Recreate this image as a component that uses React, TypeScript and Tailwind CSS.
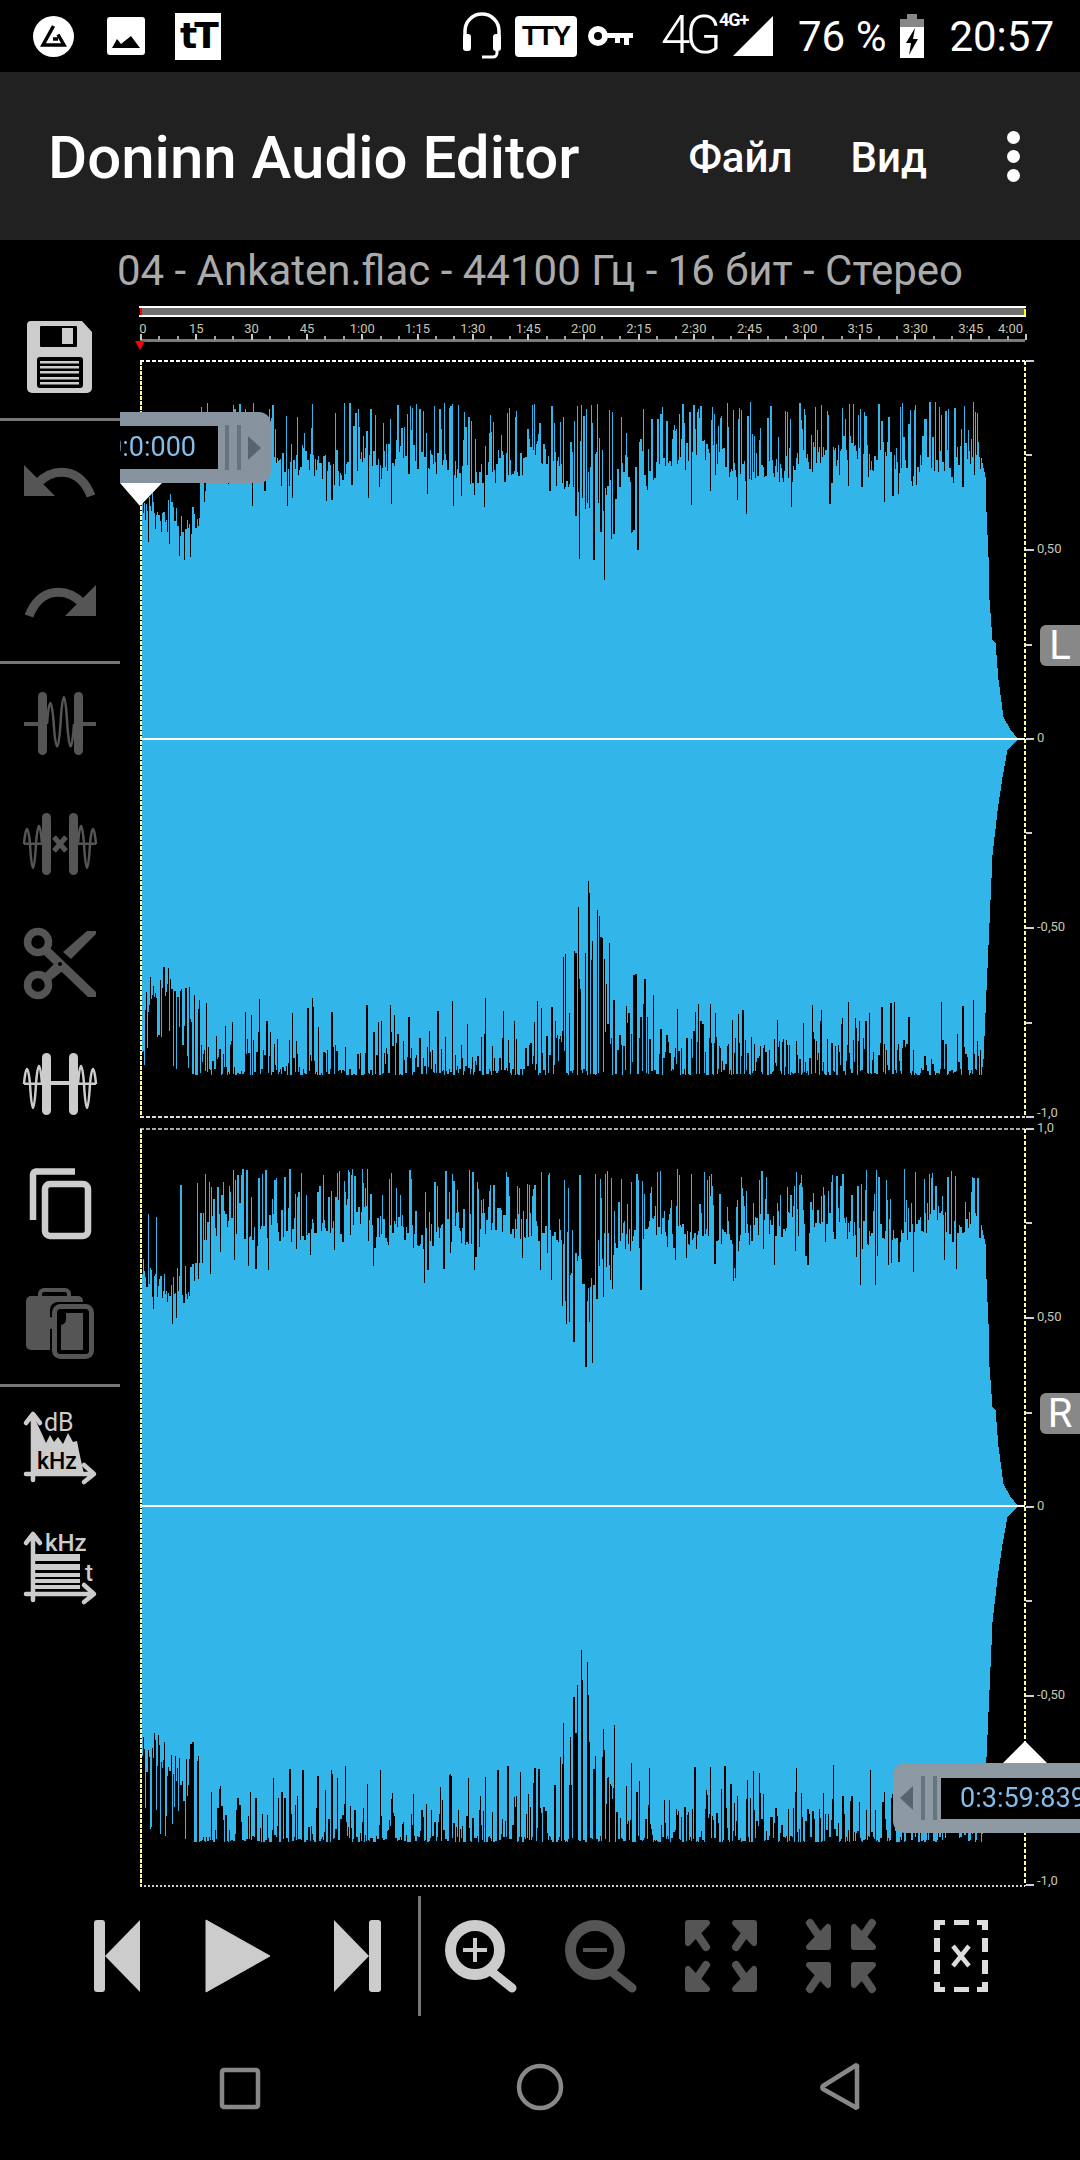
import type { ReactNode } from 'react';

const LIGHT = '#cccccc';
const DARK = '#555555';
const BLUE = '#32b5e8';

function mulberry(seed: number) {
  let a = seed;
  return () => {
    a = (a + 0x6d2b79f5) | 0;
    let t = Math.imul(a ^ (a >>> 15), 1 | a);
    t = (t + Math.imul(t ^ (t >>> 7), 61 | t)) ^ t;
    return ((t ^ (t >>> 14)) >>> 0) / 4294967296;
  };
}

function interp(table: number[][], x: number) {
  for (let i = 1; i < table.length; i++) {
    if (x <= table[i][0]) {
      const [x0, y0] = table[i - 1];
      const [x1, y1] = table[i];
      return y0 + ((y1 - y0) * (x - x0)) / (x1 - x0);
    }
  }
  return table[table.length - 1][1];
}

// fade-out at the end of the track, as distance from the zero line
const fadeTop = [[981, 281], [985, 262], [986, 227], [988, 182], [989, 139], [992, 99], [995, 96], [998, 59], [1003, 22], [1010, 9], [1017, 1], [1026, 0]];
const fadeBottom = [[981, 336], [983, 320], [986, 251], [992, 116], [997, 72], [1002, 38], [1007, 11], [1017, 1], [1026, 0]];

function channelPath(seed: number, zero: number, humpDepth: number, humpRise: number) {
  const rnd = mulberry(seed);
  let d = '';
  let x = 142;
  while (x < 1025) {
    const w = rnd() < 0.25 ? 2 : 1;
    let top: number;
    let bottom: number;
    if (x >= 981) {
      top = zero - interp(fadeTop, x);
      bottom = zero + interp(fadeBottom, x);
      d += `M${x} ${Math.round(top)}h1V${Math.round(bottom)}h-1Z`;
      x += 1;
      continue;
    }
    const g = Math.max(0, 1 - Math.abs(x - 588) / 36);
    const g2 = Math.max(0, 1 - Math.abs(x - 640) / 14) * 0.4;
    const hump = Math.max(g, g2);
    const r1 = rnd();
    const r2 = rnd();
    if (x < 200) {
      const body = zero - 225 - 10 * Math.sin(x / 9 + seed);
      if (r1 < 0.14) top = body - r2 * (seed > 5 && r2 > 0.5 ? 100 : 45);
      else if (r1 < 0.42) top = body + r2 * 36;
      else top = body + (r2 - 0.5) * 30;
      const low = zero + 252 + 12 * Math.sin(x / 8 + seed);
      const rb = rnd();
      if (x > 192 && rb < 0.5) bottom = zero + 336;
      else if (rb < 0.22) bottom = zero + 336 - r2 * 50;
      else if (rb < 0.4) bottom = low + r2 * 60;
      else bottom = low + (r2 - 0.5) * 34;
    } else {
      const cap = zero - 337;
      const body = zero - (289 + 7 * Math.sin(x / 23 + seed) + 4 * Math.sin(x / 7)) + 46 * hump;
      if (r1 < 0.34) top = cap + Math.pow(r2, 1.3) * (body - cap);
      else if (r1 < 0.58 + 0.12 * hump) top = body + Math.pow(r2, 1.5) * (60 + humpDepth * hump);
      else top = body + r2 * 26;
      const rb = rnd();
      const rc = rnd();
      const low = zero + 298 - 70 * hump;
      if (rb < 0.44) bottom = zero + 336 - rc * rc * 6;
      else if (rb < 0.84 - 0.25 * hump) bottom = low + rc * 38;
      else bottom = low - rc * (40 + humpRise * hump);
    }
    d += `M${x} ${Math.round(top)}h${w}V${Math.round(bottom)}h${-w}Z`;
    x += w;
  }
  return d;
}

const LABELS = ['0', '15', '30', '45', '1:00', '1:15', '1:30', '1:45', '2:00', '2:15', '2:30', '2:45', '3:00', '3:15', '3:30', '3:45', '4:00'];
const STEP = 885 / 16;

function Timeline() {
  return (
    <g>
      <rect x="140" y="307" width="885" height="9" fill="#6f6f6f" />
      <line x1="139" y1="307" x2="1026" y2="307" stroke="#fff" strokeWidth="2" />
      <line x1="139" y1="316" x2="1026" y2="316" stroke="#fff" strokeWidth="2" />
      <rect x="140" y="308" width="2" height="7" fill="#f00" />
      <rect x="1024" y="309" width="2" height="6" fill="#ff0" />
      <rect x="140" y="339" width="885" height="3" fill="#7a7a7a" />
      {LABELS.map((t, i) => {
        const x = 140 + i * STEP;
        return (
          <g key={t}>
            <rect x={Math.round(x)} y="334" width="2" height="6" fill="#c8c8c0" />
            {i < 16 && <rect x={Math.round(x + STEP / 3)} y="336" width="2" height="4" fill="#a0a0a0" />}
            {i < 16 && <rect x={Math.round(x + (2 * STEP) / 3)} y="336" width="2" height="4" fill="#a0a0a0" />}
            <text
              x={i === 0 ? 143 : i === 16 ? 1023 : x + 1}
              y="333"
              fontSize="13"
              fill="#c6c6b4"
              textAnchor={i === 16 ? 'end' : 'middle'}
            >
              {t}
            </text>
          </g>
        );
      })}
      <polygon points="135,341 145,341 140,350" fill="#f00" />
    </g>
  );
}

function Scale({ zero, top }: { zero: number; top: boolean }) {
  const ticks = [-378, -284, -189, -94, 0, 94, 189, 284, 378];
  const names: Record<number, string> = { [-189]: '0,50', 0: '0', 189: '-0,50', 378: '-1,0' };
  return (
    <g>
      {ticks.map((t) => (
        <rect key={t} x="1026" y={zero + t - 1} width={t % 189 === 0 ? 8 : 6} height="2" fill="#cfcfcf" />
      ))}
      {Object.entries(names).map(([t, s]) => (
        <text key={t} x="1037" y={zero + Number(t) + (Number(t) === 378 ? 0 : 3)} fontSize="13" fill="#c6c6b4">
          {s}
        </text>
      ))}
      <text x={top ? 1040 : 1037} y={top ? zero - 374 : zero - 375} fontSize="13" fill="#c6c6b4">
        1,0
      </text>
      {/* the first label runs off the top of the scale */}
      {top && <rect x="1035" y={zero - 395} width="45" height="33" fill="#000" />}
    </g>
  );
}

function Waveform() {
  return (
    <svg viewBox="120 297 960 1593" className="block w-[960px] h-[1593px]">
      <Timeline />
      <path d={channelPath(3, 739, 100, 62)} fill={BLUE} shapeRendering="crispEdges" />
      <path d={channelPath(11, 1506, 60, 85)} fill={BLUE} shapeRendering="crispEdges" />
      <rect x="141" y="738" width="884" height="2" fill="#fff" />
      <rect x="141" y="1505" width="884" height="2" fill="#fff" />
      <line x1="140" y1="361" x2="1025" y2="361" stroke="#fff" strokeWidth="2" strokeDasharray="4 2" />
      <line x1="140" y1="1117" x2="1025" y2="1117" stroke="#ddd" strokeWidth="2" strokeDasharray="4 2" />
      <line x1="140" y1="1129" x2="1025" y2="1129" stroke="#aaa" strokeWidth="2" strokeDasharray="4 2" />
      <line x1="140" y1="1886" x2="1025" y2="1886" stroke="#ccc" strokeWidth="2" strokeDasharray="2 2" />
      {[[361, 1117], [1129, 1886]].map(([a, b]) => (
        <g key={a}>
          <line x1="141" y1={a} x2="141" y2={b} stroke="#ffffa0" strokeWidth="2" strokeDasharray="4 1" />
          <line x1="1025" y1={a} x2="1025" y2={b} stroke="#ffffa0" strokeWidth="2" strokeDasharray="4 2" />
        </g>
      ))}
      <Scale zero={739} top />
      <Scale zero={1507} top={false} />
    </svg>
  );
}

function Icon({ children, w = 72, color = LIGHT }: { children: ReactNode; w?: number; color?: string }) {
  return (
    <svg viewBox={`0 0 ${w} 72`} width={w} height="72" fill={color} stroke="none" className="overflow-visible">
      {children}
    </svg>
  );
}

function SaveIcon() {
  return (
    <Icon>
      <path d="M7 0H58L68 11V67a5 5 0 0 1-5 5H8a5 5 0 0 1-5-5V4a4 4 0 0 1 4-4Z" />
      <rect x="16" y="5" width="37" height="21" rx="1" fill="#000" />
      <rect x="38" y="7" width="11" height="16" />
      <rect x="13" y="36" width="46" height="31" rx="3" fill="#000" />
      {[40, 45, 50, 56, 61].map((y) => (
        <rect key={y} x="16" y={y} width="39" height="2.5" />
      ))}
    </Icon>
  );
}

function UndoIcon({ flip }: { flip?: boolean }) {
  return (
    <Icon color={DARK}>
      <g transform={flip ? 'matrix(-1 0 0 1 72 0)' : undefined}>
        <polygon points="0,20 0,51 31,51" />
        <path d="M14 38C30 22 56 22 67 51" fill="none" stroke={DARK} strokeWidth="9" />
      </g>
    </Icon>
  );
}

function zig(x0: number, x1: number, amps: number[]) {
  const n = amps.length;
  const step = (x1 - x0) / n;
  let d = `M${x0} 36`;
  amps.forEach((a, i) => {
    const xa = x0 + step * i;
    const sign = i % 2 === 0 ? -1 : 1;
    d += `C${xa + step * 0.3} ${36 + sign * a} ${xa + step * 0.7} ${36 + sign * a} ${xa + step} 36`;
  });
  return d;
}

function WaveJoin({ color }: { color: string }) {
  return (
    <Icon color={color}>
      <rect x="0" y="34" width="14" height="4" />
      <rect x="58" y="34" width="14" height="4" />
      <rect x="14" y="4" width="9" height="63" rx="4.5" />
      <rect x="50" y="4" width="9" height="63" rx="4.5" />
      <path d={zig(23, 50, [28, 30, 36, 30])} fill="none" stroke={color} strokeWidth="2.5" />
    </Icon>
  );
}

function WaveSplit({ color, mid }: { color: string; mid: 'x' | 'bar' }) {
  return (
    <Icon color={color}>
      <rect x="0" y="34.5" width="72" height="2.5" />
      <rect x="18" y="5" width="9" height="62" rx="4.5" />
      <rect x="45" y="5" width="9" height="62" rx="4.5" />
      <path d={zig(0, 18, [20, 32, 24])} fill="none" stroke={color} strokeWidth="2.5" />
      <path d={zig(54, 72, [24, 32, 20])} fill="none" stroke={color} strokeWidth="2.5" />
      {mid === 'x' ? (
        <g>
          <rect x="27" y="28" width="18" height="16" fill="#000" />
          <path d="M30 29L42 43M42 29L30 43" stroke={color} strokeWidth="5" fill="none" />
        </g>
      ) : (
        <rect x="27" y="33" width="18" height="4" />
      )}
    </Icon>
  );
}

function ScissorsIcon() {
  return (
    <Icon color={DARK}>
      <circle cx="14" cy="14" r="10.5" fill="none" stroke={DARK} strokeWidth="7.5" />
      <circle cx="14" cy="57" r="10.5" fill="none" stroke={DARK} strokeWidth="7.5" />
      <polygon points="19,26 25,19 72,64 72,69 64,69" />
      <polygon points="20,46 33,33 41,41 26,53" />
      <polygon points="39,24 63,3 72,3 72,6 47,31" />
      <circle cx="36" cy="36" r="2" fill="#000" />
    </Icon>
  );
}

function CopyIcon() {
  return (
    <Icon>
      <path d="M51 3.5H12a4 4 0 0 0-3 3V52" fill="none" stroke={LIGHT} strokeWidth="6.5" />
      <rect x="21" y="16" width="43" height="52" rx="5" fill="none" stroke={LIGHT} strokeWidth="6.5" />
    </Icon>
  );
}

function PasteIcon() {
  return (
    <Icon color={DARK}>
      <rect x="2" y="8" width="57" height="54" rx="5" />
      <path d="M16 9V6a4 4 0 0 1 4-4h21a4 4 0 0 1 4 4v3" fill="none" stroke={DARK} strokeWidth="4" />
      <rect x="26" y="14" width="46" height="58" rx="8" fill="#000" />
      <rect x="30.5" y="18.5" width="37" height="50" rx="6" fill="none" stroke={DARK} strokeWidth="5" />
      <rect x="37" y="25" width="22" height="37" />
      <circle cx="26" cy="35" r="6" />
      <path d="M37 25h5v6a6 6 0 0 1-5 6Z" fill="#000" />
    </Icon>
  );
}

function Axes() {
  return (
    <g fill="none" stroke={LIGHT} strokeWidth="4.5" strokeLinecap="round" strokeLinejoin="round">
      <path d="M9 4V69M2 12L9 3L16 12" />
      <path d="M2 63H69M60 54L70 63L60 71" />
    </g>
  );
}

function SpectrumIcon() {
  return (
    <Icon>
      <Axes />
      <polygon points="10,6 18,23 22,32 26,24 30,31 34,26 39,33 44,22 49,31 53,30 56,45 60,63 10,63" />
      <text x="20" y="20" fontSize="25" fill={LIGHT}>dB</text>
      <text x="13" y="58" fontSize="23" fontWeight="500" fill="#000">kHz</text>
    </Icon>
  );
}

function SpectrogramIcon() {
  return (
    <Icon>
      <Axes />
      <rect x="9" y="23" width="47" height="7" />
      <rect x="9" y="33" width="47" height="6" />
      <rect x="9" y="42" width="47" height="4" />
      <rect x="9" y="48" width="47" height="4" />
      <rect x="9" y="54" width="47" height="4" />
      <text x="21" y="20" fontSize="24" fontWeight="500" fill={LIGHT}>kHz</text>
      <text x="61" y="50" fontSize="24" fontWeight="500" fill={LIGHT}>t</text>
    </Icon>
  );
}

function ToolButton({ children }: { children: ReactNode }) {
  return <div className="h-[120px] flex items-center justify-center">{children}</div>;
}

function Divider() {
  return <div className="h-[3px] bg-[#777777]" />;
}

function LeftToolbar() {
  return (
    <div className="w-[120px] flex-shrink-0 relative z-10 bg-black">
      <ToolButton><SaveIcon /></ToolButton>
      <div className="h-px" />
      <Divider />
      <ToolButton><UndoIcon /></ToolButton>
      <ToolButton><UndoIcon flip /></ToolButton>
      <Divider />
      <ToolButton><WaveJoin color={DARK} /></ToolButton>
      <ToolButton><WaveSplit color={DARK} mid="x" /></ToolButton>
      <ToolButton><ScissorsIcon /></ToolButton>
      <ToolButton><WaveSplit color={LIGHT} mid="bar" /></ToolButton>
      <ToolButton><CopyIcon /></ToolButton>
      <ToolButton><PasteIcon /></ToolButton>
      <Divider />
      <ToolButton><SpectrumIcon /></ToolButton>
      <ToolButton><SpectrogramIcon /></ToolButton>
    </div>
  );
}

function Arrow({ tf, color }: { tf: string; color: string }) {
  return (
    <g transform={tf} fill={color} stroke={color} strokeLinejoin="round" strokeLinecap="round">
      <polygon points="3,3 22,3 3,23" strokeWidth="6" />
      <line x1="8" y1="8" x2="21" y2="27" strokeWidth="8" />
    </g>
  );
}

function ArrowsIcon({ inward }: { inward?: boolean }) {
  const inner = inward ? ' rotate(180 13 15)' : '';
  return (
    <Icon color={DARK}>
      <Arrow color={DARK} tf={`translate(0 0)${inner}`} />
      <Arrow color={DARK} tf={`matrix(-1 0 0 1 72 0)${inner}`} />
      <Arrow color={DARK} tf={`matrix(1 0 0 -1 0 72)${inner}`} />
      <Arrow color={DARK} tf={`matrix(-1 0 0 -1 72 72)${inner}`} />
    </Icon>
  );
}

function MagnifierIcon({ color, plus }: { color: string; plus?: boolean }) {
  return (
    <Icon color={color}>
      <circle cx="30" cy="30" r="24.5" fill="none" stroke={color} strokeWidth="11" />
      <line x1="47" y1="52" x2="67" y2="68" stroke={color} strokeWidth="9" strokeLinecap="round" />
      <rect x="18" y="28" width="24" height="4" />
      {plus && <rect x="28" y="18" width="4" height="24" />}
    </Icon>
  );
}

function SelectXIcon() {
  return (
    <Icon color="#dddddd">
      <path d="M9 0H20V5H15V10H9ZM52 0H63V10H57V5H52ZM9 62H15V67H20V72H9ZM57 62H63V72H52V67H57ZM29 0H44V5H29ZM29 67H44V72H29ZM9 18H15V32H9ZM9 40H15V54H9ZM57 18H63V32H57ZM57 40H63V54H57Z" />
      <path d="M28 26L44 46M44 26L28 46" stroke="#dddddd" strokeWidth="4.5" fill="none" />
    </Icon>
  );
}

function PlayerBar() {
  const cell = 'w-[120px] flex items-center justify-center';
  return (
    <div className="h-[170px] flex items-start justify-center pt-[6px] pr-[1px]">
      <div className="h-[120px] flex items-stretch">
        <div className={cell}>
          <Icon>
            <rect x="12" y="0" width="11" height="72" rx="3" />
            <polygon points="23,36 58,0 58,72" />
          </Icon>
        </div>
        <div className={cell}>
          <Icon>
            <polygon points="4,0 68,36 4,72" stroke={LIGHT} strokeWidth="1" strokeLinejoin="round" />
          </Icon>
        </div>
        <div className={cell}>
          <Icon>
            <polygon points="12,0 47,36 12,72" />
            <rect x="47" y="0" width="12" height="72" rx="3" />
          </Icon>
        </div>
        <div className="w-[3px] bg-[#777777]" />
        <div className={cell}><MagnifierIcon color={LIGHT} plus /></div>
        <div className={cell}><MagnifierIcon color={DARK} /></div>
        <div className={cell}><ArrowsIcon /></div>
        <div className={cell}><ArrowsIcon inward /></div>
        <div className={cell}><SelectXIcon /></div>
      </div>
    </div>
  );
}

function NavBar() {
  return (
    <div className="h-[100px] relative">
      <svg viewBox="0 0 1080 100" className="block w-[1080px] h-[100px]" fill="none" stroke="#888888" strokeWidth="4.5">
        <rect x="222" y="10" width="36" height="37" rx="2" />
        <circle cx="540" cy="27" r="21" />
        <path d="M857 8V46a1 1 0 0 1-2 1L823 29a2 2 0 0 1 0-3L855 6a1 1 0 0 1 2 1Z" strokeLinejoin="round" />
      </svg>
    </div>
  );
}

function StatusBar() {
  return (
    <div className="h-[72px] flex items-center text-white relative">
      <div className="ml-[33px] w-[41px] h-[41px] rounded-full bg-white flex items-center justify-center">
        <svg viewBox="0 0 41 41" width="41" height="41">
          <path d="M20.5 10L10 29H31L25 18.5M20 23H25" fill="none" stroke="#000" strokeWidth="3.5" />
        </svg>
      </div>
      <div className="ml-[33px]">
        <svg viewBox="0 0 38 38" width="38" height="38">
          <rect width="38" height="38" rx="3" fill="#fff" />
          <polygon points="5,31 10,22 14,27 24,19 33,31" fill="#000" />
        </svg>
      </div>
      <div className="ml-[30px] w-[46px] h-[47px] bg-white text-black flex items-center justify-center text-[36px] font-black leading-none tracking-[-3px] [font-family:'DejaVu_Sans',sans-serif]">
        tT
      </div>
      <div className="ml-[241px]">
        <svg viewBox="0 0 40 48" width="40" height="48" fill="none" stroke="#fff">
          <path d="M3 24V19a17 17 0 0 1 34 0V24" strokeWidth="3.5" />
          <rect x="1" y="22" width="8" height="17" rx="3" fill="#fff" strokeWidth="0" />
          <rect x="31" y="22" width="8" height="17" rx="3" fill="#fff" strokeWidth="0" />
          <path d="M35 38V41a4 4 0 0 1-4 4H20" strokeWidth="3" />
        </svg>
      </div>
      <div className="ml-[13px] w-[62px] h-[41px] rounded-[4px] bg-white text-black flex items-center justify-center text-[27px] font-bold tracking-[-1px] leading-none [font-family:'Liberation_Sans',sans-serif]">
        TTY
      </div>
      <div className="ml-[11px]">
        <svg viewBox="0 0 45 20" width="45" height="20">
          <circle cx="10" cy="10" r="7" fill="none" stroke="#fff" strokeWidth="6" />
          <path d="M16 7H45V12H41V19H36V12H32V17H27V12H16Z" fill="#fff" />
        </svg>
      </div>
      <div className="ml-[28px] w-[58px] text-[53px] font-light leading-none tracking-[-5px] -mt-[2px]">4G</div>
      <div className="relative ml-[14px] w-[40px] h-[40px]">
        <svg viewBox="0 0 40 40" width="40" height="40">
          <polygon points="40,0 40,40 0,40" fill="#fff" />
        </svg>
        <div className="absolute -left-[14px] -top-[5px] text-[18px] font-bold leading-none tracking-[-1px]">4G+</div>
      </div>
      <div className="ml-[25px] mt-[2px] text-[42px] leading-none whitespace-nowrap">76 %</div>
      <div className="ml-[14px]">
        <svg viewBox="0 0 24 44" width="24" height="44">
          <rect x="7" y="0" width="10" height="6" fill="#888" />
          <rect x="0" y="5" width="24" height="39" fill="#fff" />
          <rect x="0" y="5" width="24" height="8" fill="#888" />
          <polygon points="15,14 6,29 11,29 9,41 18,25 13,25" fill="#000" />
        </svg>
      </div>
      <div className="ml-[25px] mt-[2px] text-[42px] leading-none">20:57</div>
    </div>
  );
}

function AppBar() {
  return (
    <div className="h-[168px] bg-[#212121] flex items-center text-white">
      <div className="ml-[48px] mt-[4px] text-[60px] font-medium leading-none whitespace-nowrap">Doninn Audio Editor</div>
      <div className="ml-auto mt-[4px] text-[42px] font-medium leading-none">Файл</div>
      <div className="ml-[58px] mt-[4px] text-[42px] font-medium leading-none">Вид</div>
      <div className="ml-[80px] mr-[60px] flex flex-col gap-[6px]">
        <div className="w-[13px] h-[13px] rounded-full bg-white" />
        <div className="w-[13px] h-[13px] rounded-full bg-white" />
        <div className="w-[13px] h-[13px] rounded-full bg-white" />
      </div>
    </div>
  );
}

function Grips() {
  return (
    <>
      <div className="w-[4px] self-stretch my-[13px] bg-[#67737d]" />
      <div className="w-[4px] self-stretch my-[13px] ml-[8px] bg-[#67737d]" />
    </>
  );
}

function StartHandle() {
  return (
    <div className="absolute left-0 top-[115px] w-[152px] overflow-hidden">
      <div className="h-[71px] w-[151px] bg-[#87949f] rounded-r-[12px] flex items-center blur-[0.6px]">
        <div className="w-[98px] h-[43px] bg-black flex items-center justify-end overflow-hidden pr-[22px]">
          <span className="text-[27px] leading-none text-[#85bde8] whitespace-nowrap">0:0:000</span>
        </div>
        <div className="ml-[7px] flex self-stretch"><Grips /></div>
        <svg viewBox="0 0 13 24" width="13" height="24" className="ml-[7px]">
          <polygon points="0,0 13,12 0,24" fill="#58646f" />
        </svg>
      </div>
      <svg viewBox="0 0 42 24" width="42" height="24" className="block blur-[0.6px]">
        <polygon points="0,0 42,0 20,23" fill="#fff" />
      </svg>
    </div>
  );
}

function EndHandle() {
  return (
    <div className="absolute right-0 top-[1443px] w-[187px] overflow-hidden flex flex-col items-start">
      <svg viewBox="0 0 46 24" width="46" height="24" className="block ml-[109px] -mb-px blur-[0.6px]">
        <polygon points="23,1 46,24 0,24" fill="#fff" />
      </svg>
      <div className="h-[70px] w-[220px] bg-[#8d99a3] rounded-l-[12px] flex items-center blur-[0.6px]">
        <svg viewBox="0 0 13 24" width="13" height="24" className="ml-[7px]">
          <polygon points="13,0 0,12 13,24" fill="#58646f" />
        </svg>
        <div className="ml-[8px] flex self-stretch"><Grips /></div>
        <div className="ml-[4px] flex-1 h-[41px] bg-black flex items-center pl-[19px] overflow-hidden">
          <span className="text-[27px] leading-none text-[#85bde8] whitespace-nowrap">0:3:59:839</span>
        </div>
      </div>
    </div>
  );
}

function ChannelBadge({ name, top }: { name: string; top: string }) {
  return (
    <div className={`absolute right-0 w-[40px] h-[41px] bg-[#888888] rounded-l-[6px] text-white text-[40px] leading-none flex items-center justify-center ${top}`}>
      {name}
    </div>
  );
}

export default function App() {
  return (
    <div className="w-[1080px] h-[2160px] bg-black overflow-hidden flex flex-col [font-family:Roboto,sans-serif]">
      <StatusBar />
      <AppBar />
      <div className="h-[57px] pt-[5px] flex items-center justify-center text-[#aaaaaa] text-[42px] leading-none whitespace-nowrap">
        04 - Ankaten.flac - 44100 Гц - 16 бит - Стерео
      </div>
      <div className="h-[1593px] flex relative">
        <LeftToolbar />
        <div className="relative flex-1">
          <Waveform />
          <StartHandle />
          <EndHandle />
          <ChannelBadge name="L" top="top-[328px]" />
          <ChannelBadge name="R" top="top-[1096px]" />
        </div>
      </div>
      <PlayerBar />
      <NavBar />
    </div>
  );
}
